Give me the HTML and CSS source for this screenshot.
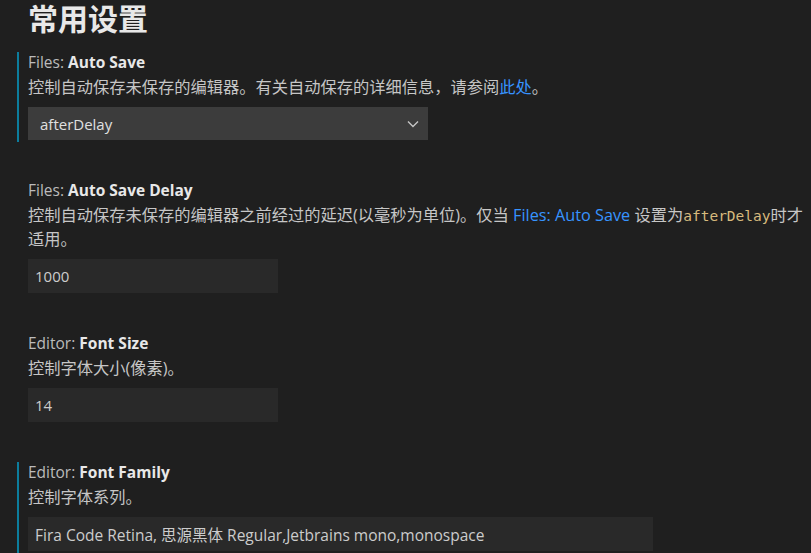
FILE: index.html
```html
<!DOCTYPE html>
<html lang="zh-CN">
<head>
<meta charset="utf-8">
<title>常用设置</title>
<link rel="stylesheet" href="styles.css">
</head>
<body>
<div class="page">
  <h1 class="title">常用设置</h1>

  <section class="item modified">
    <div class="label"><span class="cat">Files: </span><span class="name">Auto Save</span></div>
    <div class="desc">控制自动保存未保存的编辑器。有关自动保存的详细信息，请参阅<a class="link">此处</a>。</div>
    <div class="select">
      <span class="select-value">afterDelay</span>
      <svg class="chev" width="12" height="8" viewBox="0 0 12 8"><path d="M1 1.5 L6 6.5 L11 1.5" fill="none" stroke="#c5c5c5" stroke-width="1.4"/></svg>
    </div>
  </section>

  <section class="item">
    <div class="label"><span class="cat">Files: </span><span class="name">Auto Save Delay</span></div>
    <div class="desc">控制自动保存未保存的编辑器之前经过的延迟(以毫秒为单位)。仅当 <a class="link">Files: Auto Save</a> 设置为<code class="code">afterDelay</code>时才适用。</div>
    <div class="input short">1000</div>
  </section>

  <section class="item">
    <div class="label"><span class="cat">Editor: </span><span class="name">Font Size</span></div>
    <div class="desc">控制字体大小(像素)。</div>
    <div class="input short">14</div>
  </section>

  <section class="item modified">
    <div class="label"><span class="cat">Editor: </span><span class="name">Font Family</span></div>
    <div class="desc">控制字体系列。</div>
    <div class="input long">Fira Code Retina, 思源黑体 Regular,Jetbrains mono,monospace</div>
  </section>
</div>
</body>
</html>
```

FILE: styles.css
```css
html, body {
  margin: 0;
  padding: 0;
  background: #1f1f1f;
  overflow: hidden;
}
body {
  font-family: "Open Sans", "Noto Sans CJK SC", sans-serif;
  color: #c8c8c8;
}
.page {
  width: 811px;
  height: 553px;
  overflow: hidden;
  padding-left: 17px;
  box-sizing: border-box;
}
.title {
  margin: 0 0 17px 11px;
  font-family: "Noto Sans CJK SC", sans-serif;
  font-size: 30px;
  line-height: 35px;
  font-weight: 700;
  color: #e8e8e8;
}
.item {
  border-left: 2px solid transparent;
  padding: 0 0 2px 9px;
  margin-bottom: 38px;
}
.item.modified {
  border-left-color: #0c7d9d;
}
.label {
  font-size: 15.5px;
  line-height: 20px;
  white-space: nowrap;
}
.cat {
  color: #bbbbbb;
}
.name {
  font-weight: 700;
  color: #e8e8e8;
}
.desc {
  margin-top: 3px;
  font-size: 16.25px;
  line-height: 24px;
  color: #c6c6c6;
  max-width: 778px;
}
.link {
  color: #3794ff;
  line-height: 1;
}
.code {
  font-family: "DejaVu Sans Mono", monospace;
  font-size: 14.5px;
  line-height: 1;
  color: #d7ba7d;
}
.select {
  margin-top: 8px;
  width: 400px;
  height: 33px;
  background: #3c3c3c;
  display: flex;
  align-items: center;
  justify-content: space-between;
  padding: 0 9px 0 12px;
  box-sizing: border-box;
  font-size: 15px;
  color: #e0e0e0;
}
.chev {
  display: block;
}
.input {
  margin-top: 8px;
  height: 34px;
  background: #292929;
  display: flex;
  align-items: center;
  padding-left: 7px;
  box-sizing: border-box;
  font-size: 15px;
  color: #cccccc;
}
.input.short {
  width: 250px;
}
.input.long {
  width: 625px;
  font-size: 15.5px;
}
```
